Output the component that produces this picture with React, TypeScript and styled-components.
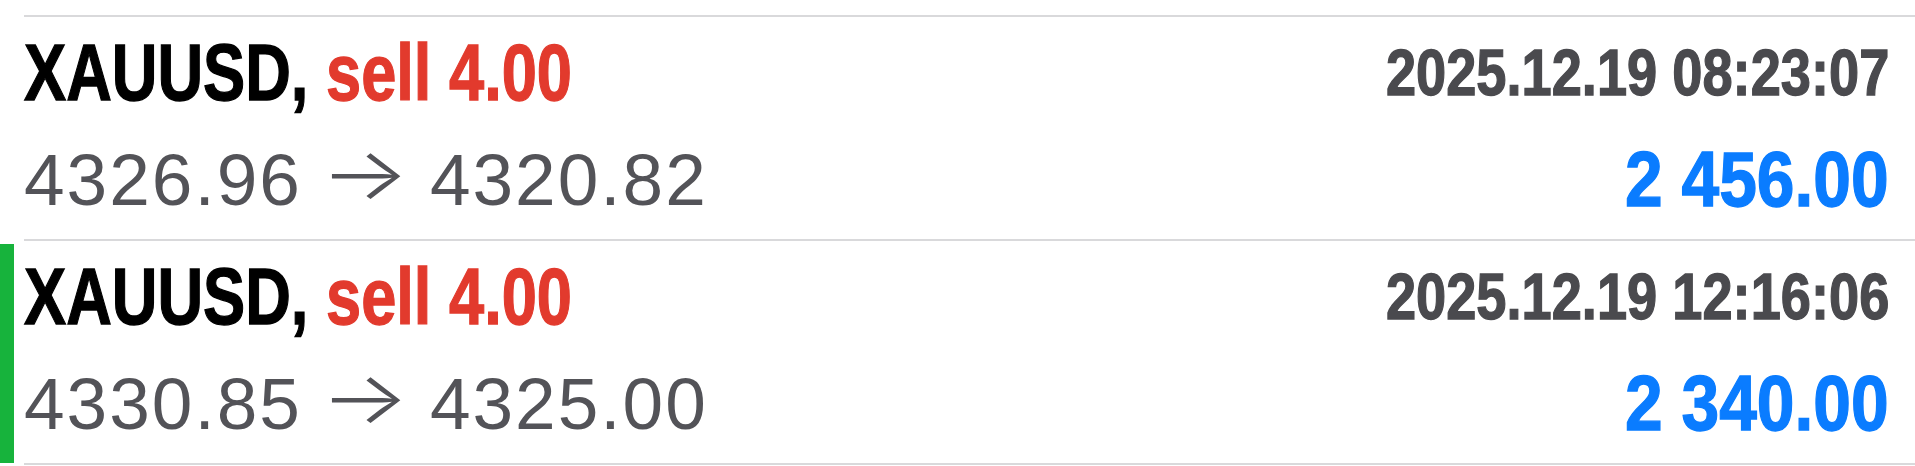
import React from "react";
import styled, { createGlobalStyle } from "styled-components";

const Global = createGlobalStyle`
  html, body {
    margin: 0;
    padding: 0;
    background: #ffffff;
  }
  body {
    font-family: "Liberation Sans", Arial, sans-serif;
    -webkit-font-smoothing: antialiased;
  }
`;

const List = styled.div`
  display: flex;
  flex-direction: column;
  padding-top: 15px;
  width: 1915px;
  overflow: hidden;
`;

const Item = styled.div`
  display: flex;
  align-items: stretch;
`;

const Indicator = styled.div<{ $active: boolean }>`
  width: 14px;
  flex: 0 0 14px;
  margin: 5px 10px 2px 0;
  background: ${(p) => (p.$active ? "#17b33c" : "transparent")};
`;

const Body = styled.div<{ $last: boolean }>`
  flex: 1;
  display: flex;
  flex-direction: column;
  height: 222px;
  padding-right: 26px;
  border-top: 2px solid #d9d9db;
  border-bottom: ${(p) => (p.$last ? "2px solid #d9d9db" : "none")};
`;

const Line = styled.div<{ $h: number }>`
  display: flex;
  justify-content: space-between;
  align-items: center;
  height: ${(p) => p.$h}px;
`;

const Condensed = styled.span<{
  $size: number;
  $squeeze: number;
  $origin: "left" | "right";
  $color: string;
}>`
  display: inline-block;
  font-family: "Liberation Sans", Arial, sans-serif;
  font-weight: 700;
  font-size: ${(p) => p.$size}px;
  line-height: 1;
  color: ${(p) => p.$color};
  -webkit-text-stroke: 1.3px currentColor;
  white-space: nowrap;
  transform: scaleX(${(p) => p.$squeeze});
  transform-origin: ${(p) => p.$origin} center;
`;

const Symbol = styled.span`
  color: #000000;
`;

const Side = styled.span`
  color: #e23a2d;
`;

const Prices = styled.span`
  display: inline-flex;
  align-items: center;
  font-family: "Liberation Sans", Arial, sans-serif;
  font-weight: 400;
  font-size: 73px;
  line-height: 1;
  letter-spacing: 2px;
  color: #535358;
  white-space: nowrap;
`;

const Arrow = styled.span`
  display: inline-flex;
  justify-content: center;
  align-items: center;
  width: 74px;
  margin: 0 28px 0 26px;
  font-family: Inter, "DejaVu Sans", sans-serif;
  font-weight: 300;
  font-size: 72px;
  letter-spacing: 0;
  transform: translateY(-6px) scaleX(1.3);
  transform-origin: center;
`;

type Deal = {
  symbol: string;
  side: string;
  volume: string;
  time: string;
  open: string;
  close: string;
  profit: string;
  active: boolean;
};

const deals: Deal[] = [
  {
    symbol: "XAUUSD",
    side: "sell",
    volume: "4.00",
    time: "2025.12.19 08:23:07",
    open: "4326.96",
    close: "4320.82",
    profit: "2 456.00",
    active: false,
  },
  {
    symbol: "XAUUSD",
    side: "sell",
    volume: "4.00",
    time: "2025.12.19 12:16:06",
    open: "4330.85",
    close: "4325.00",
    profit: "2 340.00",
    active: true,
  },
];

export default function App() {
  return (
    <>
      <Global />
      <List>
        {deals.map((d, i) => (
          <Item key={i}>
            <Indicator $active={d.active} />
            <Body $last={i === deals.length - 1}>
              <Line $h={112}>
                <Condensed $size={80} $squeeze={0.79} $origin="left" $color="#000">
                  <Symbol>{d.symbol},</Symbol> <Side>{d.side} {d.volume}</Side>
                </Condensed>
                <Condensed $size={64} $squeeze={0.847} $origin="right" $color="#4a4a4e">
                  {d.time}
                </Condensed>
              </Line>
              <Line $h={100}>
                <Prices>
                  <span>{d.open}</span>
                  <Arrow>→</Arrow>
                  <span>{d.close}</span>
                </Prices>
                <Condensed $size={77} $squeeze={0.88} $origin="right" $color="#0a7cff">
                  {d.profit}
                </Condensed>
              </Line>
            </Body>
          </Item>
        ))}
      </List>
    </>
  );
}
